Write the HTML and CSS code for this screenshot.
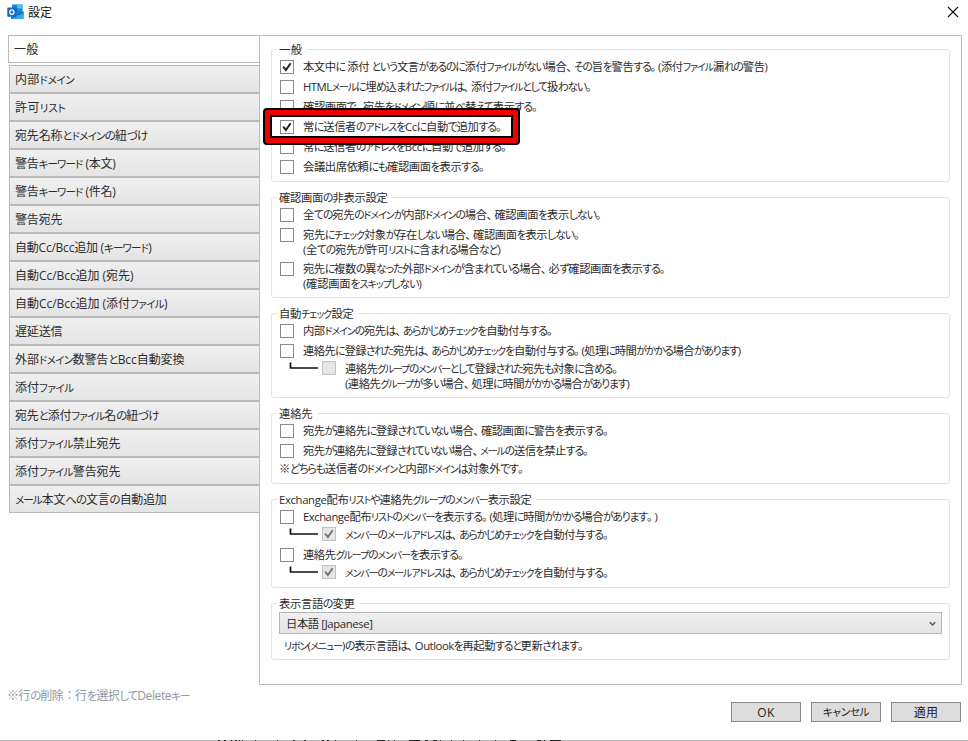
FILE: index.html
```html
<!DOCTYPE html>
<html lang="ja">
<head>
<meta charset="UTF-8" />
<meta name="viewport" content="width=device-width, initial-scale=1.0" />
<title>設定</title>
<link rel="stylesheet" href="styles.css">
</head>
<body>

<!-- shared check mark -->
<svg width="0" height="0" class="defs">
  <symbol id="check" viewBox="0 0 12 12">
    <path d="M2.2 5.6 L4.9 9 L9.6 2.2" fill="none" stroke="currentColor" stroke-width="2" />
  </symbol>
  <symbol id="branch" viewBox="0 0 30 8">
    <path d="M1.500 0.5 V6 H29" fill="none" stroke="#111" stroke-width="1.7" />
  </symbol>
</svg>

<div class="window">
  <header class="titlebar">
    <svg class="app-icon" width="17" height="16" viewBox="0 0 17 16">
      <path d="M5 0.5h10.5v8H5z" fill="#1a86d9" />
      <path d="M10 0.5h5.5v4H10z" fill="#4fc3f5" />
      <path d="M5 4.5h5v4H5z" fill="#0f5fae" />
      <path d="M4 8h12.5v7H4z" fill="#1c83d6" />
      <path d="M10 11l6.500-4v4z" fill="#0d4f96" />
      <path d="M16.500 8v7H6z" fill="#36a9ea" />
      <rect x="0.300" y="3.500" width="9.200" height="9.200" rx="0.800" fill="#0d6cc0" />
      <ellipse cx="4.900" cy="8.100" rx="2.100" ry="2.300" fill="none" stroke="#fff" stroke-width="1.300" />
    </svg>
    <h1 class="title">設定</h1>
    <svg class="close" width="12" height="12" viewBox="0 0 12 12">
      <path d="M1 1 L11 11 M11 1 L1 11" stroke="#111" stroke-width="1.1" />
    </svg>
  </header>

  <main class="body">
    <nav class="tabs">
      <a class="tab active"><span data-w="24">一般</span></a>
      <a class="tab"><span data-w="59">内部ドメイン</span></a>
      <a class="tab"><span data-w="50">許可リスト</span></a>
      <a class="tab"><span data-w="132">宛先名称とドメインの紐づけ</span></a>
      <a class="tab"><span data-w="100">警告キーワード (本文)</span></a>
      <a class="tab"><span data-w="100">警告キーワード (件名)</span></a>
      <a class="tab"><span data-w="47">警告宛先</span></a>
      <a class="tab"><span data-w="136">自動Cc/Bcc追加 (キーワード)</span></a>
      <a class="tab"><span data-w="118">自動Cc/Bcc追加 (宛先)</span></a>
      <a class="tab"><span data-w="152">自動Cc/Bcc追加 (添付ファイル)</span></a>
      <a class="tab"><span data-w="47">遅延送信</span></a>
      <a class="tab"><span data-w="169">外部ドメイン数警告とBcc自動変換</span></a>
      <a class="tab"><span data-w="58">添付ファイル</span></a>
      <a class="tab"><span data-w="143">宛先と添付ファイル名の紐づけ</span></a>
      <a class="tab"><span data-w="105">添付ファイル禁止宛先</span></a>
      <a class="tab"><span data-w="105">添付ファイル警告宛先</span></a>
      <a class="tab"><span data-w="151">メール本文への文言の自動追加</span></a>
    </nav>

    <section class="panel">
      <fieldset>
        <legend><span data-w="23">一般</span></legend>
        <label class="row"><i class="box"><svg><use href="#check" /></svg></i><span data-w="464">本文中に 添付 という文言があるのに添付ファイルがない場合、その旨を警告する。(添付ファイル漏れの警告)</span></label>
        <label class="row"><i class="box"></i><span data-w="288">HTMLメールに埋め込まれたファイルは、添付ファイルとして扱わない。</span></label>
        <label class="row"><i class="box"></i><span data-w="234">確認画面で、宛先をドメイン順に並べ替えて表示する。</span></label>
        <label class="row marked"><i class="box"><svg><use href="#check" /></svg></i><span data-w="198">常に送信者のアドレスをCcに自動で追加する。</span></label>
        <label class="row"><i class="box"></i><span data-w="203">常に送信者のアドレスをBccに自動で追加する。</span></label>
        <label class="row"><i class="box"></i><span data-w="181">会議出席依頼にも確認画面を表示する。</span></label>
      </fieldset>

      <fieldset>
        <legend><span data-w="108">確認画面の非表示設定</span></legend>
        <label class="row"><i class="box"></i><span data-w="298">全ての宛先のドメインが内部ドメインの場合、確認画面を表示しない。</span></label>
        <label class="row"><i class="box"></i><span data-w="276">宛先にチェック対象が存在しない場合、確認画面を表示しない。</span></label>
        <p class="note"><span data-w="197">(全ての宛先が許可リストに含まれる場合など)</span></p>
        <label class="row"><i class="box"></i><span data-w="362">宛先に複数の異なった外部ドメインが含まれている場合、必ず確認画面を表示する。</span></label>
        <p class="note"><span data-w="118">(確認画面をスキップしない)</span></p>
      </fieldset>

      <fieldset>
        <legend><span data-w="74">自動チェック設定</span></legend>
        <label class="row"><i class="box"></i><span data-w="249">内部ドメインの宛先は、あらかじめチェックを自動付与する。</span></label>
        <label class="row"><i class="box"></i><span data-w="437">連絡先に登録された宛先は、あらかじめチェックを自動付与する。(処理に時間がかかる場合があります)</span></label>
        <label class="row sub"><svg class="branch"><use href="#branch" /></svg><i class="box off"></i><span data-w="272">連絡先グループのメンバーとして登録された宛先も対象に含める。</span></label>
        <p class="note deep"><span data-w="284">(連絡先グループが多い場合、処理に時間がかかる場合があります)</span></p>
      </fieldset>

      <fieldset class="contacts">
        <legend><span data-w="33">連絡先</span></legend>
        <label class="row"><i class="box"></i><span data-w="305">宛先が連絡先に登録されていない場合、確認画面に警告を表示する。</span></label>
        <label class="row"><i class="box"></i><span data-w="285">宛先が連絡先に登録されていない場合、メールの送信を禁止する。</span></label>
        <p class="remark"><span data-w="244">※どちらも送信者のドメインと内部ドメインは対象外です。</span></p>
      </fieldset>

      <fieldset>
        <legend><span data-w="252">Exchange配布リストや連絡先グループのメンバー表示設定</span></legend>
        <label class="row"><i class="box"></i><span data-w="354">Exchange配布リストのメンバーを表示する。(処理に時間がかかる場合があります。)</span></label>
        <label class="row sub"><svg class="branch"><use href="#branch" /></svg><i class="box off"><svg><use href="#check" /></svg></i><span data-w="263">メンバーのメールアドレスは、あらかじめチェックを自動付与する。</span></label>
        <label class="row"><i class="box"></i><span data-w="160">連絡先グループのメンバーを表示する。</span></label>
        <label class="row sub"><svg class="branch"><use href="#branch" /></svg><i class="box off"><svg><use href="#check" /></svg></i><span data-w="263">メンバーのメールアドレスは、あらかじめチェックを自動付与する。</span></label>
      </fieldset>

      <fieldset class="language">
        <legend><span data-w="75">表示言語の変更</span></legend>
        <div class="select">
          <span data-w="86">日本語 [Japanese]</span>
          <svg width="7" height="6" viewBox="0 0 7 6"><path d="M0.8 1.2 L3.5 4 L6.2 1.2" fill="none" stroke="#555" stroke-width="1.5" /></svg>
        </div>
        <p><span data-w="299">リボン(メニュー)の表示言語は、Outlookを再起動すると更新されます。</span></p>
      </fieldset>
    </section>
  </main>

  <footer class="footer">
    <p class="hint"><span data-w="182">※行の削除：行を選択してDeleteキー</span></p>
    <div class="buttons">
      <button type="button"><span data-w="17">OK</span></button>
      <button type="button"><span data-w="46">キャンセル</span></button>
      <button type="button"><span data-w="24">適用</span></button>
    </div>
  </footer>
</div>

<!-- edge of the window behind the dialog -->
<svg class="behind" width="968" height="1" viewBox="0 0 968 1">
  <path d="M0 .5H968" stroke="#b9b9b9" />
  <path d="M218 .5h2m4 0h2m5 0h1m3 0h2m2 0h1m2 0h1m12 0h1m21 0h1m15 0h2m9 0h2m16 0h2m3 0h2m6 0h1m20 0h1m20 0h8m3 0h1m5 0h1m14 0h11m5 0h3m5 0h4m3 0h1m10 0h1m11 0h1m15 0h1m15 0h1m14 0h6m21 0h4m3 0h1m5 0h11" stroke="#222" />
</svg>

<script src="script.js"></script>
</body>
</html>
```

FILE: styles.css
```css
*,
*::before,
*::after {
  box-sizing: border-box;
  margin: 0;
  padding: 0;
}

body {
  width: 968px;
  height: 741px;
  overflow: hidden;
  background: #fefefe;
  color: #2c2c2c;
  font-family: "Open Sans", "Noto Sans CJK JP", sans-serif;
  font-size: 11.3px;
  line-height: 15px;
  font-feature-settings: "palt";
}

.defs {
  position: absolute;
}

.window {
  height: 740px;
  display: flex;
  flex-direction: column;
}

/* Kana are set tighter than kanji, as in the Windows UI fonts */
[data-w] {
  white-space: nowrap;
  letter-spacing: var(--fit, 0px);
}

.hira {
  font-size: 0.96em;
  letter-spacing: calc(var(--fit, 0px) - 0.7px);
}

.kata {
  font-size: 0.88em;
  letter-spacing: calc(var(--fit, 0px) - 0.6px);
}

.punct {
  letter-spacing: calc(var(--fit, 0px) + 2.4px);
}

.colon {
  margin: 0 3px;
}

/* Title bar */
.titlebar {
  height: 35px;
  padding: 4px 9px 0 7px;
  display: flex;
  align-items: flex-start;
}

.title {
  margin-left: 4px;
  font-size: 12px;
  font-weight: normal;
  line-height: 17px;
  color: #111;
}

.close {
  margin: 2px 0 0 auto;
}

/* Tabs */
.body {
  height: 650px;
  padding: 0 6px 0 8px;
  display: flex;
}

.tabs {
  width: 251px;
  font-size: 12px;
}

.tab {
  display: flex;
  align-items: center;
  height: 28px;
  margin-left: 1px;
  padding: 1px 0 0 5px;
  border: 1px solid #b9b9b9;
  border-right: none;
  background: linear-gradient(#f0f0f0, #e4e4e4);
}

.tab.active {
  height: 28px;
  margin: 0 0 2px;
  background: #fefefe;
}

.panel {
  flex: 1;
  padding: 6px 11px 0;
  border: 1px solid #bcbcbc;
}

/* Groups */
fieldset {
  margin-bottom: 8px;
  padding: 2px 7px 7px;
  border: 1px solid #e1e5e7;
  border-radius: 3px;
}

fieldset.contacts {
  padding-bottom: 6px;
}

legend {
  height: 15px;
  margin-left: -2px;
  padding: 0 5px 0 2px;
}

.row {
  display: flex;
  height: 15px;
  margin-bottom: 5px;
}

.row:last-child {
  margin-bottom: 0;
}

.row:has(+ .note) {
  margin-bottom: 0;
}

.row:has(+ .sub),
.row:has(+ .remark) {
  margin-bottom: 3px;
}

.box {
  flex: none;
  width: 14px;
  height: 14px;
  margin: 1px 9px 0 1px;
  border: 1px solid #8a8a8a;
  background: #fff;
  color: #222;
}

.box svg {
  display: block;
  width: 12px;
  height: 12px;
}

.box.off {
  margin-top: 0;
  border-color: #c2c2c2;
  background: #e6e6e6;
  color: #777;
}

.branch {
  width: 30px;
  height: 8px;
  margin: 1px 2px 0 10px;
}

.note {
  height: 14px;
  margin: 0 0 5px 24px;
  line-height: 16px;
}

.note:last-child {
  margin-bottom: 0;
}

.note.deep {
  margin-left: 66px;
}

/* Annotation frame over the highlighted option */
.marked {
  position: relative;
}

.marked::before,
.marked::after {
  content: "";
  position: absolute;
}

.marked::before {
  left: -16px;
  top: -11px;
  width: 257px;
  height: 37px;
  border: 9px solid #000;
  border-radius: 4px;
}

.marked::after {
  left: -14px;
  top: -9px;
  width: 253px;
  height: 33px;
  border: 5px solid #f00000;
  border-radius: 2px;
}

/* Language select */
.language {
  height: 64px;
  padding-top: 1px;
}

.select {
  display: flex;
  align-items: center;
  justify-content: space-between;
  height: 22px;
  padding: 1px 5px 0 6px;
  border: 1px solid #b4b4b4;
  background: linear-gradient(#efefef, #e4e4e4);
}

.language p {
  margin: 4px 0 0 5px;
}

/* Footer */
.footer {
  flex: 1;
  display: flex;
  justify-content: space-between;
  padding: 2px 7px 0;
}

.hint {
  padding-top: 1px;
  color: #8f98a3;
  font-size: 12px;
}

.buttons {
  display: flex;
  gap: 10px;
  padding-top: 15px;
}

button {
  width: 70px;
  height: 20px;
  border: 1px solid #8c8c8c;
  background: #dddddd;
  color: #222;
  font: inherit;
  font-size: 12px;
  font-feature-settings: inherit;
}

.behind {
  display: block;
}
```

FILE: script.js
```js
// Wrap runs of kana and punctuation, then track each label to its design width
document.querySelectorAll('[data-w]').forEach(function (el) {
  const text = el.textContent;
  el.innerHTML = text
    .replace(/[ぁ-ん]+/g, '<span class="hira">$&</span>')
    .replace(/[ァ-ヴー]+/g, '<span class="kata">$&</span>')
    .replace(/[、。]/g, '<span class="punct">$&</span>')
    .replace(/：/g, '<span class="colon">$&</span>');

  // spacing after a closing full stop is not part of the label
  const tail = text.endsWith('。') ? 2 : 0;
  const width = el.getBoundingClientRect().width - tail;
  const fit = (Number(el.dataset.w) + 0.5 - width) / text.length;
  el.style.setProperty('--fit', fit.toFixed(3) + 'px');
});
```
